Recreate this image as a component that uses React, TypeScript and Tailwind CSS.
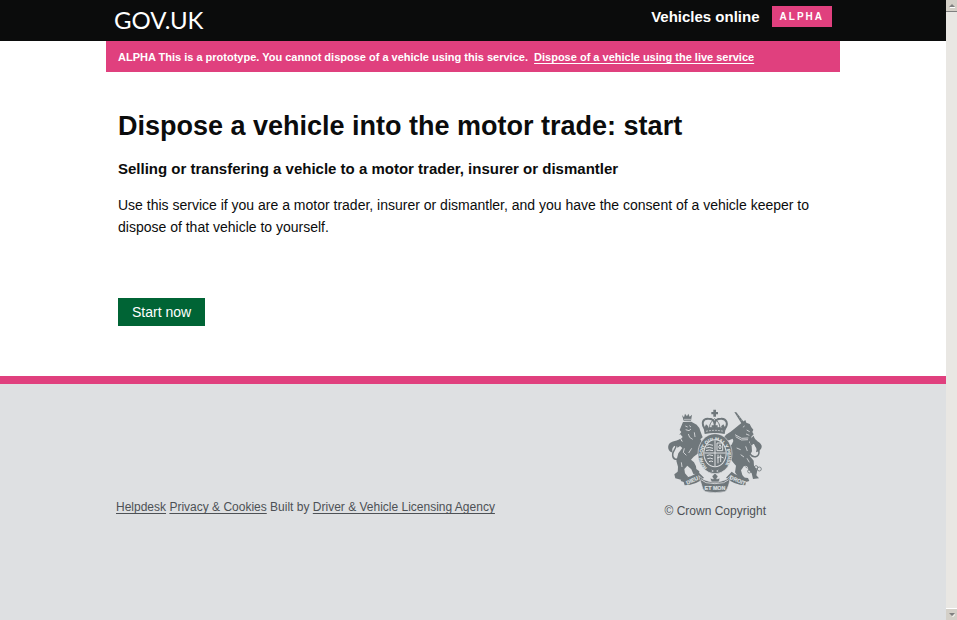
const Crest = () => (
  <svg viewBox="34 28 288 258" className="h-[86px] w-24" fill="#6f777b" aria-hidden="true">
    {/* lion */}
    <path d="M79 46l6 7 3-11 6 8 4-8 4 9 7-6-3 18H84z" />
    <path d="M85 59h21" stroke="#dee0e2" strokeWidth="2" />
    <path d="M82 67l25-1 16 9 8 10 4 12 6 16-7 6 6 8-4 6-2 10-6 4 4 10-7 6-11 8-8 9 9 8 6 12 1 8 9 7-1 7-17 1-6-14-12-11-9 10 2 13 9 10-2 6-19 2-10-18 1-20-5-18 6-22 12-16-6-5-9-4-5 5-6-7 7-9 15-1 6 2-6-9 5-5-7-8-4 3 7-10-5-6z" />
    <path d="M89 79l7 3M101 78l5 4M90 90l10 3 6-5M98 103l4 10 9 6M116 98l2 14M86 146l-3 12 9 9M108 146l-9 14M77 188l2 14" fill="none" stroke="#dee0e2" strokeWidth="2.5" />
    <path d="M74 172c-10 12-22 7-23-5-2-13 13-20 10-33" fill="none" stroke="#6f777b" strokeWidth="4.5" />
    <path d="M74 117c6 11 3 22-9 27 0-8-5-8-9-5-8 7-7 14-4 20-12-3-16-12-14-21 3-15 22-12 36-21z" />
    <path d="M56 224l12-9 13 2 6 15-9 9-19-5z" />

    {/* unicorn */}
    <path d="M236 37l6 1 25 32-8 4z" />
    <path d="M245 47l4-3M250 55l5-3M255 63l5-3" stroke="#dee0e2" strokeWidth="1" />
    <path d="M262 66l7-5 3 8 10 4 5 10 6 7-3 7 4 7-7 7 2 9-9 7 8 12 1 16-7 13 12 15 1 15 10 14-3 15 8 9-18 2-4-17-12-14-11-8-9 13 4 14 10 12-3 8-17-1-3-14-9-13 3-20-9-10-9-12-9-6-10 4-4 9-9-6 4-13 12-8-3-6-14-3-10 9-8-5 8-15 15-5 19 7 14-3 5-11-2-7-11 5-12 2-5-8 8-11 14-9z" />
    <path d="M238 105l20 11 20-1M240 111l17 10 20-1M266 78l-3 5M273 91l9 5M271 103l10 4M270 140l5 14M243 145l12 5M255 165l10 7M274 176l7 12" fill="none" stroke="#dee0e2" strokeWidth="2.5" />
    <path d="M283 162c9 16 27 10 27-5 0-12-16-18-12-31" fill="none" stroke="#6f777b" strokeWidth="4.5" />
    <path d="M294 108c-12 9-16 22-5 30 2-8 8-5 11-1 4 7 3 13 1 21 12-4 18-12 17-20-3-12-20-13-24-30z" />
    <g fill="none" stroke="#6f777b" strokeWidth="2.5">
      <circle cx="270" cy="206" r="6" stroke="#dee0e2" />
      <circle cx="281" cy="215" r="5" />
      <circle cx="294" cy="216" r="5" />
      <circle cx="301" cy="203" r="5" />
      <circle cx="311" cy="208" r="6" />
    </g>

    {/* crown */}
    <path d="M173 30h8v7h6v7h-6v7h-8v-7h-6v-7h6z" />
    <g fill="none" stroke="#6f777b" strokeWidth="6">
      <path d="M150 91c-16-21-8-35 8-34 10 0 18 5 19 15 1-10 8-15 19-15 16-1 25 15 9 34" />
      <path d="M177 66v24M168 80h18" />
    </g>
    <path d="M163 90c-4-13 2-23 14-33 12 10 18 20 14 33" fill="none" stroke="#6f777b" strokeWidth="3" />
    <path d="M144 86q33-8 66 0l-3 17q-30-6-60 0zM151 74l7 6-3 9-9-4zM203 74l6 10-7 5-6-9z" />
    <path d="M151 95q26-6 53 0" fill="none" stroke="#dee0e2" strokeWidth="2" strokeDasharray="6 3" />

    {/* garter and arms */}
    <ellipse cx="178" cy="162" rx="51" ry="60" stroke="#dee0e2" strokeWidth="2" />
    <path id="garter" d="M154 205A38 46 0 1 1 202 205" fill="none" />
    <text fill="#dee0e2" stroke="#dee0e2" strokeWidth="0.5" fontSize="14" fontWeight="700" fontFamily="Liberation Sans, Arial, sans-serif">
      <textPath href="#garter">HONI SOIT QUI MAL Y PENSE</textPath>
    </text>
    <ellipse cx="178" cy="161" rx="35" ry="42" fill="#dee0e2" />
    <ellipse cx="178" cy="161" rx="32" ry="39" />
    <g fill="none" stroke="#dee0e2" strokeWidth="3">
      <path d="M178 122v77M146 160h64" />
      <path d="M153 137q7-5 19 0M151 145q9-4 21 1M151 153q9-4 21 0" />
      <path d="M184 130h17v23h-17zM193 135q-8 7 0 13 7-5 0-13" />
      <path d="M187 165v26M195 165v22M184 175q12-8 20 0" />
      <path d="M153 168q7-5 19 0M155 177q9-4 17 1M160 186q7-4 12 0" />
    </g>
    <path d="M168 211l5 3-5 3M188 211l-5 3 5 3" fill="none" stroke="#dee0e2" strokeWidth="2" />

    {/* motto ribbon */}
    <path d="M79 235q29-1 48-19l18 18q-23 22-58 23l-3-10-9-3zM277 235q-27-1-49-19l-17 18q25 22 58 23l2-10 10-3z" />
    <path d="M129 228l15 12q34 13 67 0l15-12-7 28q-6 19-12 20-29 6-57 0-9-3-12-20z" stroke="#dee0e2" strokeWidth="2" />
    <path d="M136 240l15 9q27 6 53 0l15-9" fill="none" stroke="#dee0e2" strokeWidth="2.5" />
    <path d="M178 220l9 10-4 8 10-3-3 12h-23l-4-12 10 3-4-8z" stroke="#dee0e2" strokeWidth="2" />
    <g fill="#dee0e2" stroke="#dee0e2" strokeWidth="0.5" fontSize="16" fontWeight="700" fontFamily="Liberation Sans, Arial, sans-serif" textAnchor="middle">
      <text x="112" y="247" transform="rotate(-25 112 247)">DIEU</text>
      <text x="178" y="271">ET MON</text>
      <text x="244" y="247" transform="rotate(23 244 247)">DROIT</text>
    </g>
  </svg>
);

const Header = () => (
  <header className="bg-[#0b0c0c] text-white">
    <div className="mx-auto flex h-[41px] max-w-[734px] items-start justify-between px-2">
      <a href="#" className="pt-1 font-[Lato,sans-serif] text-2xl leading-8">
        GOV.UK
      </a>
      <div className="flex items-start gap-3 pt-1.5">
        <a href="#" className="text-[15px] leading-[22px] font-bold">
          Vehicles online
        </a>
        <span className="bg-[#e0407e] px-2 py-0.5 text-[10px] leading-[17px] font-bold tracking-[2px]">
          ALPHA
        </span>
      </div>
    </div>
  </header>
);

const Main = () => (
  <main className="mx-auto w-full max-w-[734px] text-[#0b0c0c]">
    <p className="bg-[#e0407e] px-3 pt-[5px] pb-1 text-[11px] leading-[22px] font-bold text-white">
      ALPHA This is a prototype. You cannot dispose of a vehicle using this service.&nbsp;{" "}
      <a href="#" className="underline underline-offset-2">
        Dispose of a vehicle using the live service
      </a>
    </p>
    <div className="px-3 pt-9 pb-[50px]">
      <h1 className="text-[27px] leading-9 font-bold">Dispose a vehicle into the motor trade: start</h1>
      <h2 className="mt-3.5 text-[15px] leading-[22px] font-bold">
        Selling or transfering a vehicle to a motor trader, insurer or dismantler
      </h2>
      <p className="mt-3.5 text-sm leading-[22px]">
        Use this service if you are a motor trader, insurer or dismantler, and you have the consent of a vehicle keeper to
        dispose of that vehicle to yourself.
      </p>
      <button type="button" className="mt-[60px] block bg-[#006435] px-3.5 py-0.5 text-sm leading-6 text-white">
        Start now
      </button>
    </div>
  </main>
);

const Footer = () => (
  <footer className="flex-1 border-t-8 border-[#e0407e] bg-[#dee0e2] text-[#4d5155]">
    <div className="mx-auto flex max-w-[734px] items-end justify-between pt-[25px] pr-[74px] pl-2.5 text-xs leading-4">
      <p className="pb-1">
        <a href="#" className="underline underline-offset-2">Helpdesk</a>{" "}
        <a href="#" className="underline underline-offset-2">Privacy &amp; Cookies</a>{" "}
        Built by{" "}
        <a href="#" className="underline underline-offset-2">Driver &amp; Vehicle Licensing Agency</a>
      </p>
      <a href="#" className="flex flex-col items-center gap-2">
        <Crest />
        © Crown Copyright
      </a>
    </div>
  </footer>
);

const Scrollbar = () => (
  <aside className="flex w-[11px] shrink-0 flex-col justify-between bg-[#e9e7e3]">
    <button type="button" aria-label="Scroll up" className="flex h-3 items-center justify-center border-b border-[#808080] bg-[#d4d0c8]">
      <svg viewBox="0 0 6 4" className="h-1 w-1.5" fill="#808080">
        <path d="M3 0l3 3H0z" />
        <path d="M1 3h5v1H1z" fill="#fff" />
      </svg>
    </button>
    <button type="button" aria-label="Scroll down" className="flex h-3 items-center justify-center border-t border-white bg-[#d4d0c8]">
      <svg viewBox="0 0 6 4" className="h-1 w-1.5" fill="#808080">
        <path d="M0 0h6L3 3z" />
        <path d="M3 4l3-3v1L4 4z" fill="#fff" />
      </svg>
    </button>
  </aside>
);

const App = () => {
  return (
    <div className="flex min-h-screen bg-white font-['Liberation_Sans',Arial,sans-serif]">
      <div className="flex min-w-0 flex-1 flex-col">
        <Header />
        <Main />
        <Footer />
      </div>
      <Scrollbar />
    </div>
  );
};

export default App;
